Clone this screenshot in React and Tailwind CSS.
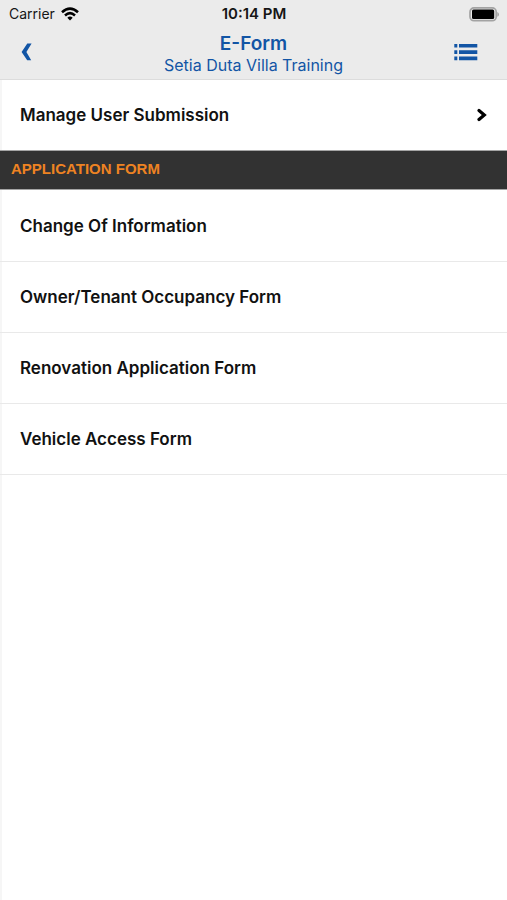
const forms = [
  { id: 1, name: 'Change Of Information' },
  { id: 2, name: 'Owner/Tenant Occupancy Form' },
  { id: 3, name: 'Renovation Application Form' },
  { id: 4, name: 'Vehicle Access Form' },
];

export default function App() {
  return (
    <div className="min-h-screen bg-white border-l-2 border-[#f6f6f6] font-['Inter',sans-serif] text-[#111111]">
      <header className="-ml-0.5 bg-[#ebebeb] border-b border-[#dcdcdc]">
        <StatusBar />

        {/* Navigation */}
        <div className="grid grid-cols-[1fr_auto_1fr] items-center h-[51px] text-[#1255a5]">
          <button type="button" aria-label="Back" className="justify-self-start pl-5 pt-2 pb-3">
            <svg width="12" height="18" viewBox="0 0 12 18" fill="currentColor">
              <path d="M7.3 0.5H11.6L6.4 9L11.2 17.2H7.2L1.6 9Z" />
            </svg>
          </button>
          <div className="text-center">
            <h1 className="text-[19px] leading-[22px] font-semibold">E-Form</h1>
            <p className="text-base leading-5">Setia Duta Villa Training</p>
          </div>
          <button type="button" aria-label="Menu" className="justify-self-end pr-[29px] pt-2 pb-3">
            <svg width="24" height="18" viewBox="0 0 24 18" fill="currentColor">
              <path d="M0.3 1h3v3.6H0.3zM5 1h18.3v3.6H5zM0.3 7.3h3v3.6H0.3zM5 7.3h18.3v3.6H5zM0.3 13.6h3v3.6H0.3zM5 13.6h18.3v3.6H5z" />
            </svg>
          </button>
        </div>
      </header>

      <main>
        <a href="#submissions" className="flex items-center justify-between h-[70px] pl-[18px] pr-5">
          <span className="text-[17px] leading-6 font-semibold">Manage User Submission</span>
          <svg width="10" height="14" viewBox="0 0 10 14" fill="none" stroke="#000000" strokeWidth="3.2" strokeLinecap="round">
            <path d="M2 2.5L7.3 7L2 11.5" />
          </svg>
        </a>

        <h2 className="-ml-0.5 flex items-center h-10 pl-[11px] pb-0.5 bg-[#323232] border-y border-[#a5a5a5] font-['Liberation_Sans',sans-serif] text-[15px] font-bold text-[#ee8322]">
          APPLICATION FORM
        </h2>

        <ul className="pt-px">
          {forms.map((form) => (
            <li key={form.id} className="-ml-0.5 border-b border-[#e9e9e9]">
              <a href={`#form-${form.id}`} className="flex items-center h-[70px] px-5 text-[17px] leading-6 font-semibold">
                {form.name}
              </a>
            </li>
          ))}
        </ul>
      </main>
    </div>
  );
}

function StatusBar() {
  return (
    <div className="grid grid-cols-3 items-center h-7 pl-[9px] pr-2 text-[#161616]">
      <div className="flex items-center gap-1.5">
        <span className="text-sm">Carrier</span>
        <svg width="18" height="14" viewBox="0 0 18 14" fill="none" stroke="#000000" strokeWidth="2.6">
          <path d="M1 5.2Q9 -2 17 5.2" />
          <path d="M4 8.4Q9 4 14 8.4" />
          <path d="M6.3 10.7Q9 8.4 11.7 10.7L9 13.6Z" fill="#000000" stroke="none" />
        </svg>
      </div>
      <span className="text-center text-[15px] leading-5 font-semibold">10:14 PM</span>
      <svg className="justify-self-end" width="30" height="15" viewBox="0 0 30 15">
        <rect x="1" y="0.9" width="26.2" height="12.8" rx="4" fill="#ebebeb" stroke="#a3a3a3" strokeWidth="1.7" />
        <rect x="3" y="2.6" width="22.2" height="9.4" rx="1.5" fill="#000000" />
        <path d="M28.3 5V9.8Q30 9 30 7.4T28.3 5Z" fill="#a3a3a3" />
      </svg>
    </div>
  );
}
